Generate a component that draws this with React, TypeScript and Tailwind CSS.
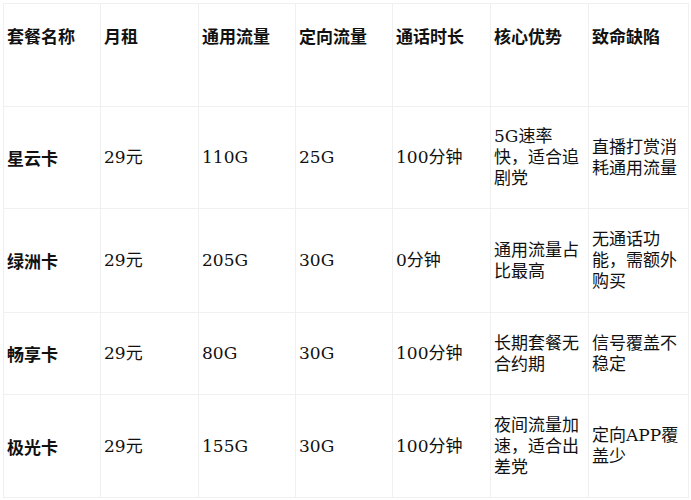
import React from "react";

const headers = ["套餐名称", "月租", "通用流量", "定向流量", "通话时长", "核心优势", "致命缺陷"];
const rows: { h: string; cells: string[] }[] = [
  { h: "h-[102px]", cells: ["星云卡", "29元", "110G", "25G", "100分钟", "5G速率快，适合追剧党", "直播打赏消耗通用流量"] },
  { h: "h-[104px]", cells: ["绿洲卡", "29元", "205G", "30G", "0分钟", "通用流量占比最高", "无通话功能，需额外购买"] },
  { h: "h-[82px]", cells: ["畅享卡", "29元", "80G", "30G", "100分钟", "长期套餐无合约期", "信号覆盖不稳定"] },
  { h: "h-[103px]", cells: ["极光卡", "29元", "155G", "30G", "100分钟", "夜间流量加速，适合出差党", "定向APP覆盖少"] },
];

export default function App() {
  return (
    <div className="w-[691px] h-[500px] bg-white pt-[3px] pl-[3px] text-[#111] [font-family:'DejaVu_Serif','Noto_Sans_CJK_SC',serif] text-[17px] leading-[21px]">
      <table className="table-fixed border-collapse w-[685px]">
        <colgroup>
          <col className="w-[97px]" />
          <col className="w-[98px]" />
          <col className="w-[97px]" />
          <col className="w-[97px]" />
          <col className="w-[98px]" />
          <col className="w-[98px]" />
          <col className="w-[100px]" />
        </colgroup>
        <thead>
          <tr className="h-[103px]">
            {headers.map((t) => (
              <th key={t} className="border border-[#f0f0f0] align-top text-left font-bold pt-[21px] pl-[3px] pr-[4px] [font-family:'Noto_Sans_CJK_SC',sans-serif]">
                {t}
              </th>
            ))}
          </tr>
        </thead>
        <tbody>
          {rows.map((r) => (
            <tr key={r.cells[0]} className={r.h}>
              {r.cells.map((c, i) => (
                <td
                  key={i}
                  className={
                    "border border-[#f0f0f0] align-middle text-left pl-[3px] pr-[4px] " +
                    (i === 0 ? "font-bold [font-family:'Noto_Sans_CJK_SC',sans-serif]" : "")
                  }
                >
                  {c}
                </td>
              ))}
            </tr>
          ))}
        </tbody>
      </table>
    </div>
  );
}
